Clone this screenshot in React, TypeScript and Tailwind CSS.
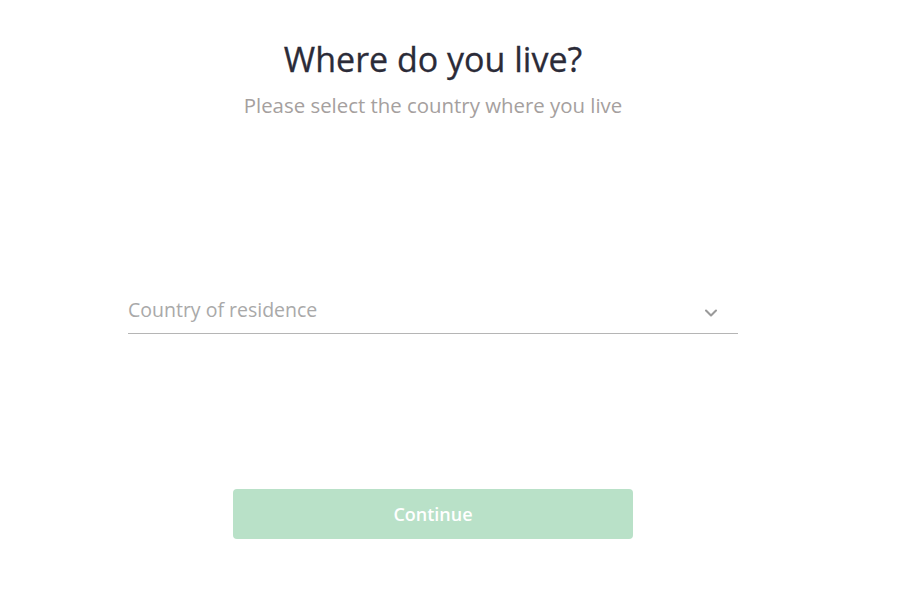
import { ChevronDown } from 'lucide-react'

export default function App() {
    return (
        <div className="min-h-screen bg-white" style={{ fontFamily: '"Open Sans", sans-serif' }}>
            <div className="w-[866px] flex flex-col items-center pt-[36px]">
                {/* Heading */}
                <h1 className="text-[34px] leading-[46px] text-[#2b2b38] [-webkit-text-stroke:0.3px_#2b2b38]">Where do you live?</h1>
                <p className="mt-[9px] text-[20.4px] leading-[28px] text-[#a5a09e]">
                    Please select the country where you live
                </p>

                {/* Select */}
                <div className="mt-[177px] w-[610px] flex items-center justify-between border-b border-[#b5b5b5] pb-[9px]">
                    <span className="text-[19.5px] leading-[28px] text-[#a9a9a9]">Country of residence</span>
                    <ChevronDown className="w-[20px] h-[20px] mr-[17px] mt-[6px] text-[#9a9a9a]" strokeWidth={2.5} />
                </div>

                {/* Button */}
                <button className="mt-[155px] w-[400px] h-[50px] rounded-[4px] bg-[#b9e1c8] text-white text-[18px] font-semibold">
                    Continue
                </button>
            </div>
        </div>
    )
}
